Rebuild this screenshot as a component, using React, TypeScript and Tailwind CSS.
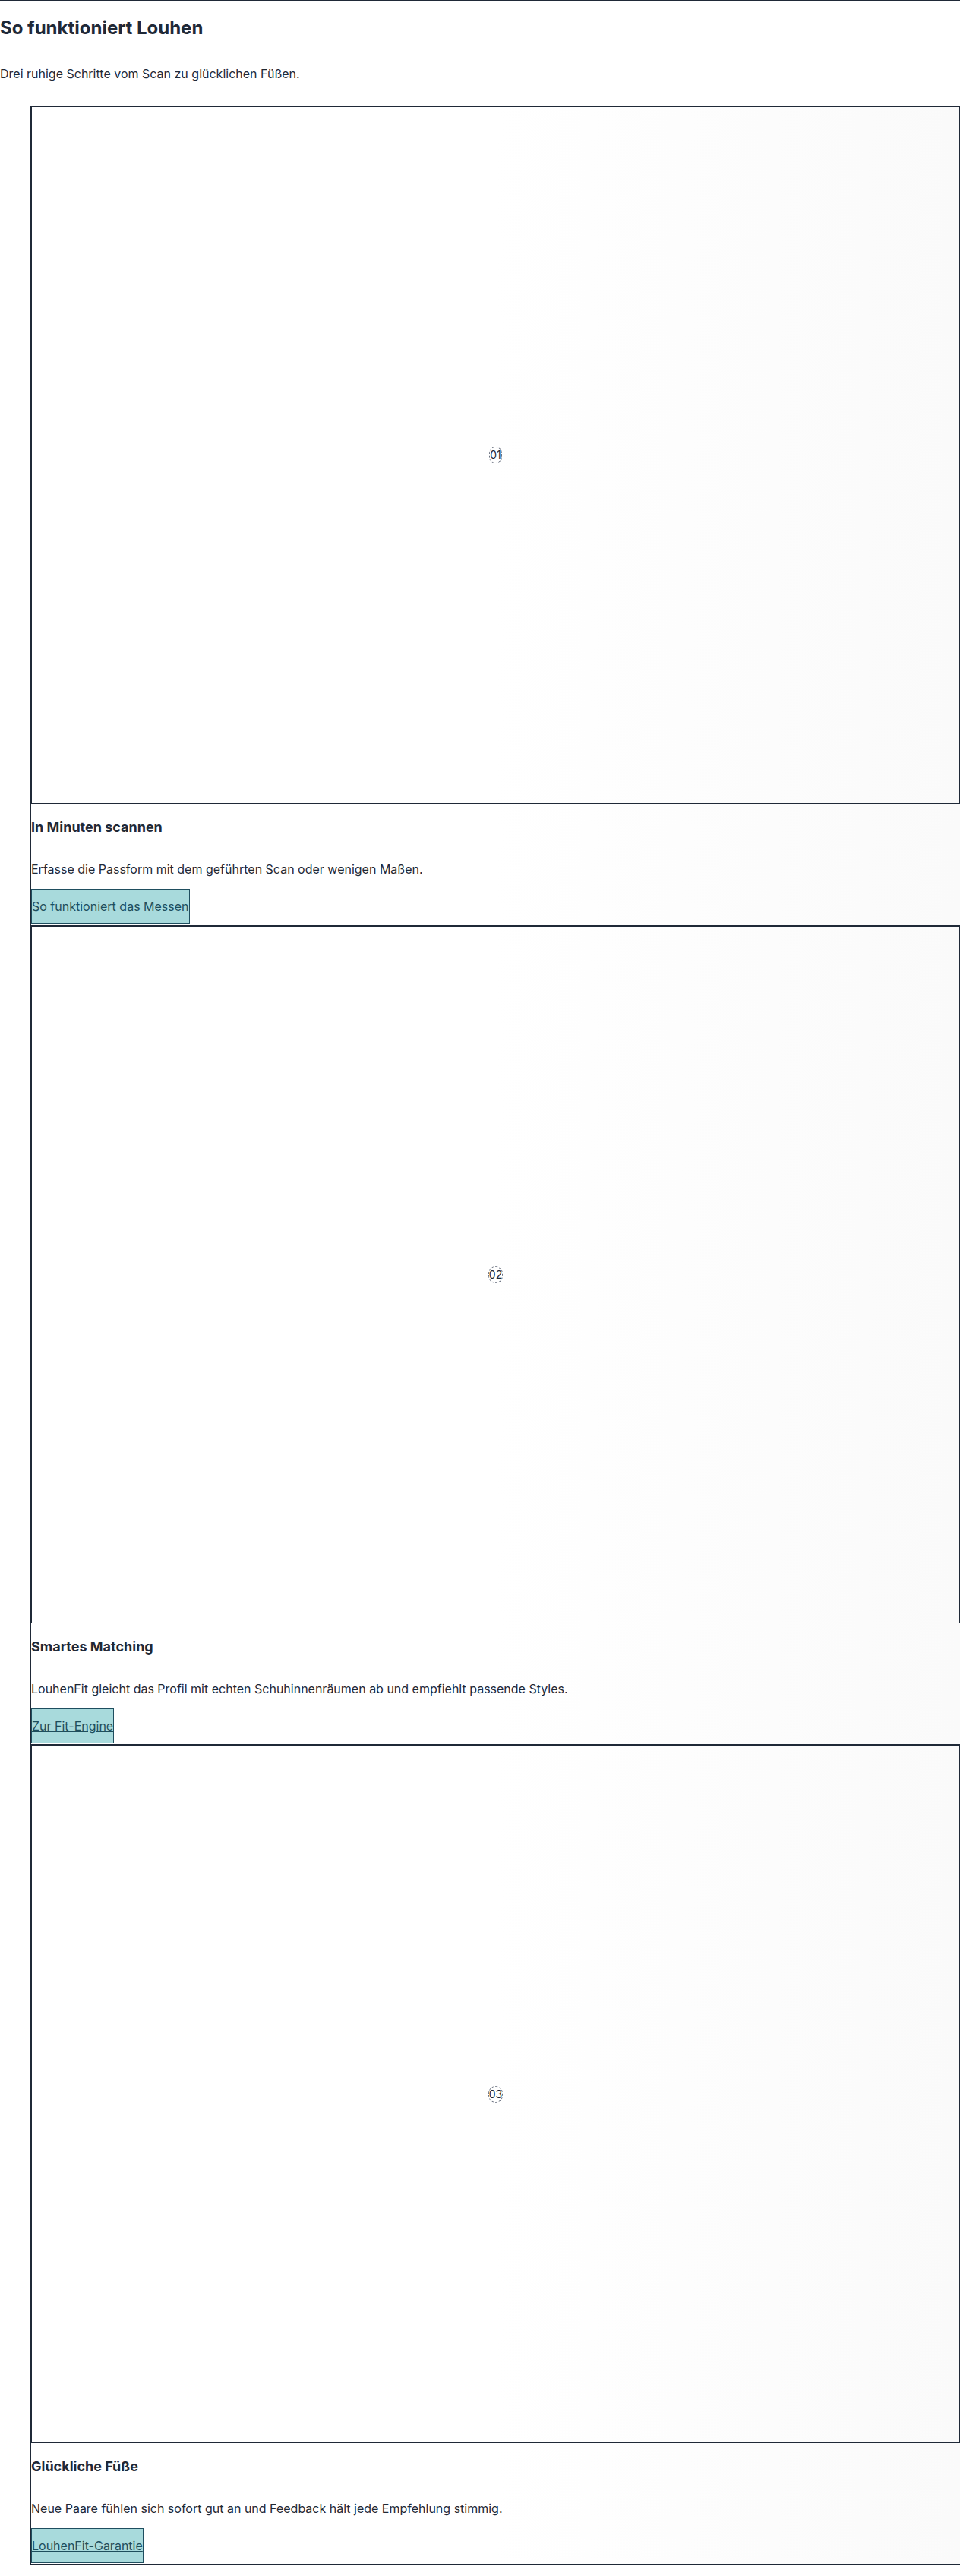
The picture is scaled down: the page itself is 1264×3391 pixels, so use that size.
import React from "react";

const steps = [
  {
    n: "01",
    title: "In Minuten scannen",
    text: "Erfasse die Passform mit dem geführten Scan oder wenigen Maßen.",
    link: "So funktioniert das Messen",
  },
  {
    n: "02",
    title: "Smartes Matching",
    text: "LouhenFit gleicht das Profil mit echten Schuhinnenräumen ab und empfiehlt passende Styles.",
    link: "Zur Fit-Engine",
  },
  {
    n: "03",
    title: "Glückliche Füße",
    text: "Neue Paare fühlen sich sofort gut an und Feedback hält jede Empfehlung stimmig.",
    link: "LouhenFit-Garantie",
  },
];

export default function App() {
  return (
    <div
      className="overflow-x-hidden bg-white text-[#1f2937]"
      style={{ fontFamily: "Inter, 'Noto Sans', sans-serif" }}
    >
      <section className="border-t border-[#1f2937] pb-[15px]">
        <h2 className="mt-5 text-2xl leading-8 font-bold text-[#1f2937]">
          So funktioniert Louhen
        </h2>
        <p className="mt-8 text-base leading-6 text-[#1f2937]">
          Drei ruhige Schritte vom Scan zu glücklichen Füßen.
        </p>
        <ol className="mt-[30px] pl-10 list-none">
          {steps.map((s) => (
            <li
              key={s.n}
              className="w-[calc(100%+1px)] h-[1079px] border border-[#1f2937] bg-gradient-to-r from-white via-white to-[#fafafa] flex flex-col"
            >
              <div className="h-[918px] shrink-0 border border-[#1f2937] flex items-center justify-center">
                <span className="rounded-full border border-dashed border-[#6b7280] text-sm leading-5 text-[#1f2937]">
                  {s.n}
                </span>
              </div>
              <div className="flex flex-col items-start pb-px">
                <h3 className="mt-[17px] text-lg leading-7 font-bold text-[#1f2937]">
                  {s.title}
                </h3>
                <p className="mt-[29px] text-base leading-6 text-[#1f2937]">
                  {s.text}
                </p>
                <a
                  href="#"
                  className="mt-[14px] h-[46px] flex items-center border border-[#1f4e5f] bg-[#a8dadc] text-base leading-6 text-[#1e4e5c] underline"
                >
                  {s.link}
                </a>
              </div>
            </li>
          ))}
        </ol>
      </section>
    </div>
  );
}
